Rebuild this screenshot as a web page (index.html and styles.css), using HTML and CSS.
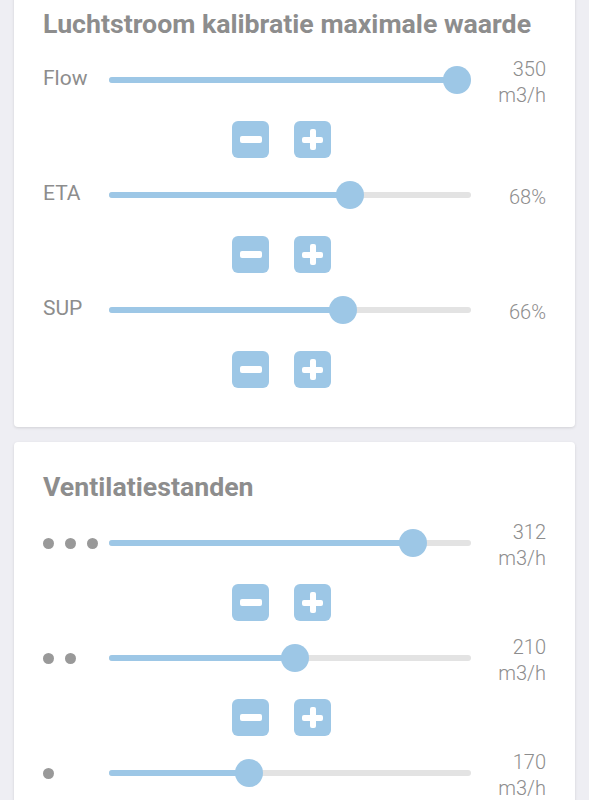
FILE: index.html
```html
<!DOCTYPE html>
<html lang="nl">
<head>
    <meta charset="UTF-8">
    <meta name="viewport" content="width=device-width, initial-scale=1.0">
    <title>Instellingen</title>
    <link rel="stylesheet" href="styles.css">
</head>
<body>
    <div class="page">
        <section class="card">
            <h2 class="card-title">Luchtstroom kalibratie maximale waarde</h2>

            <div class="row">
                <div class="label">Flow</div>
                <div class="track" style="--p:1"><div class="fill"></div><div class="thumb"></div></div>
                <div class="value">350<br>m3/h</div>
            </div>
            <div class="steps">
                <button class="step minus" aria-label="min"></button>
                <button class="step plus" aria-label="plus"></button>
            </div>

            <div class="row">
                <div class="label">ETA</div>
                <div class="track" style="--p:0.68"><div class="fill"></div><div class="thumb"></div></div>
                <div class="value">68%</div>
            </div>
            <div class="steps">
                <button class="step minus" aria-label="min"></button>
                <button class="step plus" aria-label="plus"></button>
            </div>

            <div class="row">
                <div class="label">SUP</div>
                <div class="track" style="--p:0.66"><div class="fill"></div><div class="thumb"></div></div>
                <div class="value">66%</div>
            </div>
            <div class="steps">
                <button class="step minus" aria-label="min"></button>
                <button class="step plus" aria-label="plus"></button>
            </div>
        </section>

        <section class="card">
            <h2 class="card-title">Ventilatiestanden</h2>

            <div class="row">
                <div class="label dots"><span></span><span></span><span></span></div>
                <div class="track" style="--p:0.868"><div class="fill"></div><div class="thumb"></div></div>
                <div class="value">312<br>m3/h</div>
            </div>
            <div class="steps">
                <button class="step minus" aria-label="min"></button>
                <button class="step plus" aria-label="plus"></button>
            </div>

            <div class="row">
                <div class="label dots"><span></span><span></span></div>
                <div class="track" style="--p:0.515"><div class="fill"></div><div class="thumb"></div></div>
                <div class="value">210<br>m3/h</div>
            </div>
            <div class="steps">
                <button class="step minus" aria-label="min"></button>
                <button class="step plus" aria-label="plus"></button>
            </div>

            <div class="row">
                <div class="label dots"><span></span></div>
                <div class="track" style="--p:0.377"><div class="fill"></div><div class="thumb"></div></div>
                <div class="value">170<br>m3/h</div>
            </div>
            <div class="steps">
                <button class="step minus" aria-label="min"></button>
                <button class="step plus" aria-label="plus"></button>
            </div>
        </section>
    </div>
</body>
</html>
```

FILE: styles.css
```css
* {
    margin: 0;
    padding: 0;
    box-sizing: border-box;
}

:root {
    --blue: #9dc7e6;
    --grey-text: #8d8d8d;
    --track: #e3e3e3;
    --bg: #eeeef3;
}

body {
    background-color: var(--bg);
    font-family: 'Roboto', sans-serif;
    overflow: hidden;
}

.page {
    padding: 0 14px;
    margin-top: -21px;
    display: flex;
    flex-direction: column;
    gap: 15px;
}

.card {
    background-color: #fff;
    border-radius: 4px;
    box-shadow: 0 1px 3px rgba(0, 0, 0, 0.12);
    padding: 30px 29px 28px;
}

.card-title {
    color: var(--grey-text);
    font-size: 26.7px;
    font-weight: 700;
    line-height: 30px;
    margin-bottom: 15px;
}

.row {
    display: flex;
    align-items: center;
    height: 52px;
}

.label {
    width: 66px;
    flex-shrink: 0;
    padding-bottom: 4px;
    color: var(--grey-text);
    font-size: 21px;
}

.dots {
    display: flex;
    gap: 11px;
    padding-bottom: 0;
}

.dots span {
    width: 11px;
    height: 11px;
    border-radius: 50%;
    background-color: #999;
}

.track {
    flex: 1;
    position: relative;
    height: 6px;
    border-radius: 3px;
    background-color: var(--track);
}

.fill {
    height: 100%;
    width: calc(14px + (100% - 28px) * var(--p));
    border-radius: 3px;
    background-color: var(--blue);
}

.thumb {
    position: absolute;
    top: 50%;
    left: calc((100% - 28px) * var(--p));
    width: 28px;
    height: 28px;
    margin-top: -14px;
    border-radius: 50%;
    background-color: var(--blue);
}

.value {
    width: 75px;
    flex-shrink: 0;
    padding-top: 4px;
    text-align: right;
    color: var(--grey-text);
    font-size: 20px;
    font-weight: 300;
    line-height: 26px;
}

.steps {
    display: flex;
    gap: 25px;
    padding-left: 189px;
    margin: 15px 0 11px;
}

.step {
    position: relative;
    width: 37px;
    height: 37px;
    border: none;
    border-radius: 6px;
    background-color: var(--blue);
    cursor: pointer;
}

.step::before,
.step::after {
    content: '';
    position: absolute;
    left: 50%;
    top: 50%;
    background-color: #fff;
    border-radius: 2px;
}

.minus::before {
    width: 22px;
    height: 7px;
    margin: -3.5px 0 0 -11px;
}

.minus::after {
    display: none;
}

.plus::before {
    width: 21px;
    height: 6px;
    margin: -3px 0 0 -10.5px;
}

.plus::after {
    width: 6px;
    height: 21px;
    margin: -10.5px 0 0 -3px;
}
```
